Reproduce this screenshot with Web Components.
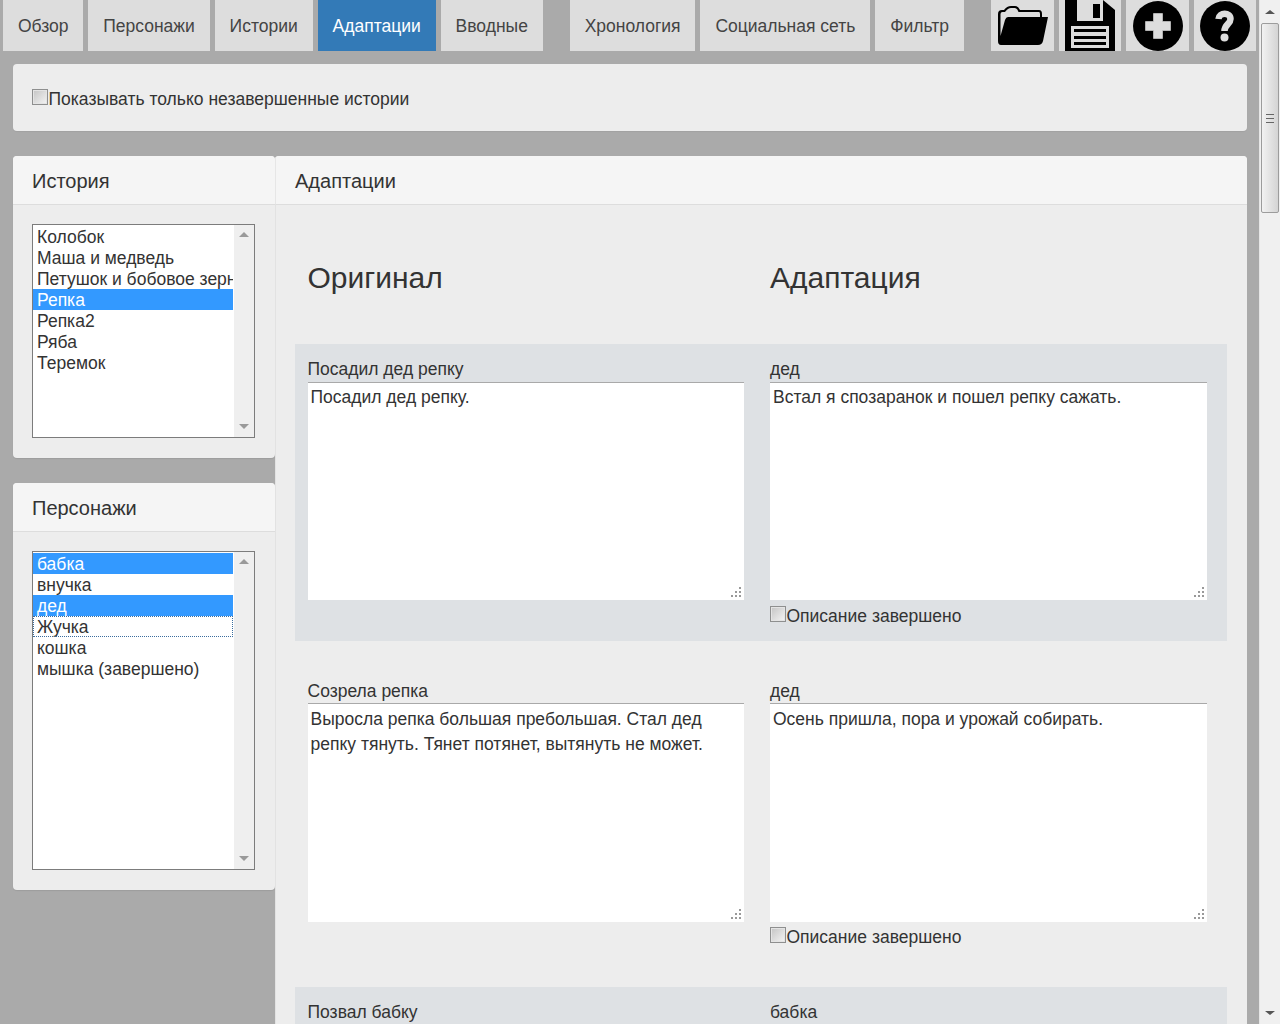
<!DOCTYPE html>
<html>
<head>
<meta charset="utf-8">
<style>
  html, body { margin: 0; padding: 0; height: 100%; overflow: hidden; background: #aaaaaa; }
  body { font-family: "Liberation Sans", Arial, sans-serif; color: #333; }
</style>
</head>
<body>
<story-app></story-app>

<script>
class StoryApp extends HTMLElement {
  constructor() {
    super();
    this.attachShadow({ mode: 'open' });
    this.shadowRoot.innerHTML = `
      <style>
        :host { display: flex; width: 1280px; height: 1024px; overflow: hidden; background: #aaa; }
        .page { width: 1259px; height: 1024px; overflow: hidden; flex: none; }
        .columns { display: flex; align-items: flex-start; padding: 0 12px 0 13px; }
        .side { width: 262px; flex: none; }
        .main { flex: 1; }
        .top { margin: 13px 12px 25px 13px; }
      </style>
      <div class="page">
        <nav-bar>
          <nav-tab>Обзор</nav-tab>
          <nav-tab>Персонажи</nav-tab>
          <nav-tab>Истории</nav-tab>
          <nav-tab active>Адаптации</nav-tab>
          <nav-tab>Вводные</nav-tab>
          <nav-tab gap>Хронология</nav-tab>
          <nav-tab>Социальная сеть</nav-tab>
          <nav-tab>Фильтр</nav-tab>
          <icon-tab kind="open" gap></icon-tab>
          <icon-tab kind="save"></icon-tab>
          <icon-tab kind="add"></icon-tab>
          <icon-tab kind="help"></icon-tab>
        </nav-bar>
        <filter-well class="top"><check-label>Показывать только незавершенные истории</check-label></filter-well>
        <div class="columns">
          <div class="side">
            <side-panel heading="История" style="margin-bottom:25px">
              <list-box height="214" items="Колобок|Маша и медведь|Петушок и бобовое зерно|*Репка|Репка2|Ряба|Теремок"></list-box>
            </side-panel>
            <side-panel heading="Персонажи">
              <list-box height="319" items="*бабка|внучка|*дед|~Жучка|кошка|мышка (завершено)"></list-box>
            </side-panel>
          </div>
          <div class="main">
            <main-panel heading="Адаптации">
              <adapt-head></adapt-head>
              <adapt-row shaded event="Посадил дед репку" who="дед"
                original="Посадил дед репку." text="Встал я спозаранок и пошел репку сажать."></adapt-row>
              <adapt-row event="Созрела репка" who="дед"
                original="Выросла репка большая пребольшая. Стал дед репку тянуть. Тянет потянет, вытянуть не может."
                text="Осень пришла, пора и урожай собирать."></adapt-row>
              <adapt-row shaded event="Позвал бабку" who="бабка" original="" text=""></adapt-row>
            </main-panel>
          </div>
        </div>
      </div>
      <page-scrollbar></page-scrollbar>
    `;
  }
}

class NavBar extends HTMLElement {
  constructor() {
    super();
    this.attachShadow({ mode: 'open' });
    this.shadowRoot.innerHTML = `
      <style>
        :host { display: flex; gap: 5px; height: 51px; padding-left: 3px; }
      </style>
      <slot></slot>
    `;
  }
}

class NavTab extends HTMLElement {
  constructor() {
    super();
    this.attachShadow({ mode: 'open' });
    this.shadowRoot.innerHTML = `
      <style>
        :host {
          display: block;
          height: 51px;
          line-height: 52px;
          padding: 0 14.9px;
          font-size: 17.5px;
          background: #dddddd;
          color: #444;
          white-space: nowrap;
          box-sizing: border-box;
        }
        :host([active]) { background: #337ab7; color: #fff; }
        :host([gap]) { margin-left: 22px; }
      </style>
      <slot></slot>
    `;
  }
}

const ICONS = {
  open: `<svg width="50" height="39" viewBox="0 0 50 39" style="display:block;margin-top:6px">
      <path d="M0 8 Q0 4 4 4 L6 4 Q9 0 13 0 L17 0 Q20 0 22 4 L41 4 Q44 4 44 8 L44 11 L50 11 L45 35 Q44 39 40 39 L3 39 Q0 39 0 35 Z" fill="#000"/>
      <path d="M2.5 8 Q2.5 6 4.5 6 L7 6 Q10 2 13 2 L17 2 Q19 2 20.5 6 L41 6 Q42 6 42 8 L42 11 L10 11 Q8 11 7 14 L2.5 30 Z" fill="#dddddd"/>
    </svg>`,
  save: `<svg width="50" height="51" viewBox="0 0 50 51" style="display:block">
      <path d="M0 0 H38 L50 10 V51 H0 Z" fill="#000"/>
      <rect x="12" y="0" width="26" height="21" fill="#dddddd"/>
      <rect x="28" y="4" width="7" height="14" fill="#000"/>
      <rect x="6" y="26" width="38" height="22" fill="#dddddd"/>
      <rect x="9" y="29" width="32" height="3" fill="#000"/>
      <rect x="9" y="36" width="32" height="3" fill="#000"/>
      <rect x="9" y="42" width="32" height="3" fill="#000"/>
    </svg>`,
  add: `<svg width="50" height="50" viewBox="0 0 50 50" style="display:block;margin-top:1px">
      <circle cx="25" cy="25" r="25" fill="#000"/>
      <path d="M20.5 12.5 H29.5 V20.5 H37.5 V29.5 H29.5 V37.5 H20.5 V29.5 H12.5 V20.5 H20.5 Z" fill="#dddddd" stroke="#dddddd" stroke-width="0.6" stroke-linejoin="round"/>
    </svg>`,
  help: `<svg width="50" height="50" viewBox="0 0 50 50" style="display:block;margin-top:1px">
      <circle cx="25" cy="25" r="25" fill="#000"/>
      <path d="M18.5 18 C19 11 30.5 11 30.5 18 C30.5 23 24.5 23.5 24.5 30" fill="none" stroke="#dddddd" stroke-width="6.5"/>
      <circle cx="24.5" cy="36.5" r="4" fill="#dddddd"/>
    </svg>`
};

class IconTab extends HTMLElement {
  constructor() {
    super();
    this.attachShadow({ mode: 'open' });
    this.shadowRoot.innerHTML = `
      <style>
        :host {
          display: flex;
          justify-content: center;
          align-items: flex-start;
          width: 62.5px;
          height: 51px;
          background: #dddddd;
          overflow: hidden;
        }
        :host([gap]) { margin-left: 22.6px; }
      </style>
      ${ICONS[this.getAttribute('kind')]}
    `;
  }
}

class FilterWell extends HTMLElement {
  constructor() {
    super();
    this.attachShadow({ mode: 'open' });
    this.shadowRoot.innerHTML = `
      <style>
        :host {
          display: flex;
          align-items: center;
          height: 67px;
          padding: 2px 0 0 19px;
          box-sizing: border-box;
          background: #ededed;
          border-radius: 4px;
          box-shadow: 0 1px 1px rgba(0,0,0,.05);
        }
      </style>
      <slot></slot>
    `;
  }
}

class CheckLabel extends HTMLElement {
  constructor() {
    super();
    this.attachShadow({ mode: 'open' });
    this.shadowRoot.innerHTML = `
      <style>
        :host { display: flex; font-size: 17.5px; line-height: 20px; color: #333; white-space: nowrap; }
        .box {
          width: 16px; height: 16px; margin-right: 0.5px; flex: none;
          box-sizing: border-box;
          border: 1px solid #8e8f8f;
          background: linear-gradient(135deg, #c4c4c4, #f4f4f4);
          box-shadow: inset 0 0 0 1px #e4e4e4;
        }
      </style>
      <span class="box"></span><slot></slot>
    `;
  }
}

class SidePanel extends HTMLElement {
  constructor() {
    super();
    this.attachShadow({ mode: 'open' });
    this.shadowRoot.innerHTML = `
      <style>
        :host {
          display: block;
          background: #ededed;
          border-radius: 4px;
          overflow: hidden;
          box-shadow: 0 1px 1px rgba(0,0,0,.08);
        }
        .head {
          height: 48px;
          line-height: 51px;
          padding-left: 19px;
          font-size: 20px;
          color: #333;
          background: #f5f5f5;
          border-bottom: 1px solid #dddddd;
        }
        .body { padding: 19px 20px 20px 19px; }
      </style>
      <div class="head">${this.getAttribute('heading')}</div>
      <div class="body"><slot></slot></div>
    `;
  }
}

class MainPanel extends HTMLElement {
  constructor() {
    super();
    this.attachShadow({ mode: 'open' });
    this.shadowRoot.innerHTML = `
      <style>
        :host {
          display: block;
          background: #ededed;
          border-radius: 4px 4px 0 0;
          overflow: hidden;
          box-shadow: inset 1px 0 #e2e2e2;
        }
        .head {
          height: 48px;
          line-height: 51px;
          padding-left: 19px;
          font-size: 20px;
          color: #333;
          background: #f5f5f5;
          border-bottom: 1px solid #dddddd;
          border-left: 1px solid #e6e6e6;
        }
        .body { padding: 0 20px; }
      </style>
      <div class="head">${this.getAttribute('heading')}</div>
      <div class="body"><slot></slot></div>
    `;
  }
}

class ListBox extends HTMLElement {
  constructor() {
    super();
    this.attachShadow({ mode: 'open' });
    const rows = this.getAttribute('items').split('|').map(item => {
      let cls = '';
      if (item[0] == '*') cls = 'sel';
      if (item[0] == '~') cls = 'focus';
      return `<div class="row ${cls}">${cls ? item.slice(1) : item}</div>`;
    }).join('');
    this.shadowRoot.innerHTML = `
      <style>
        :host {
          display: flex;
          box-sizing: border-box;
          width: 223px;
          height: ${this.getAttribute('height')}px;
          border: 1px solid #7c7c7c;
          background: #fff;
          font-size: 17.5px;
          color: #333;
        }
        .rows { width: 200px; flex: none; padding-top: 1px; overflow: hidden; }
        .row {
          height: 21px;
          line-height: 22px;
          padding-left: 4px;
          white-space: nowrap;
          overflow: hidden;
          box-sizing: border-box;
        }
        .sel { background: #3399ff; color: #fff; }
        .focus { outline: 1px dotted #3b6d9e; outline-offset: -1px; }
        .track {
          margin-left: 1px;
          flex: 1;
          background: #efefef;
          display: flex;
          flex-direction: column;
          justify-content: space-between;
          align-items: center;
          padding: 7px 0 8px;
        }
        .up, .down { width: 0; height: 0; border-left: 5px solid transparent; border-right: 5px solid transparent; }
        .up { border-bottom: 5px solid #9a9a9a; }
        .down { border-top: 5px solid #9a9a9a; }
      </style>
      <div class="rows">${rows}</div>
      <div class="track"><span class="up"></span><span class="down"></span></div>
    `;
  }
}

class AdaptHead extends HTMLElement {
  constructor() {
    super();
    this.attachShadow({ mode: 'open' });
    this.shadowRoot.innerHTML = `
      <style>
        :host {
          display: grid;
          grid-template-columns: 462.5px 1fr;
          height: 139px;
          box-sizing: border-box;
          padding: 55px 0 0 12.5px;
          font-size: 30px;
          line-height: 36px;
          color: #333;
        }
      </style>
      <div>Оригинал</div><div>Адаптация</div>
    `;
  }
}

class TextBox extends HTMLElement {
  constructor() {
    super();
    this.attachShadow({ mode: 'open' });
    this.shadowRoot.innerHTML = `
      <style>
        :host {
          display: block;
          position: relative;
          height: 218.5px;
          box-sizing: border-box;
          padding: 2.5px 3px 2px;
          background: #fff;
          border-top: 1px solid #a9a9a9;
          font-size: 17.5px;
          line-height: 25px;
          color: #333;
        }
        svg { position: absolute; right: 3px; bottom: 3px; }
      </style>
      <slot></slot>
      <svg width="10" height="10" viewBox="0 0 10 10" fill="#999">
        <rect x="8" y="0" width="2" height="2"/>
        <rect x="4" y="4" width="2" height="2"/><rect x="8" y="4" width="2" height="2"/>
        <rect x="0" y="8" width="2" height="2"/><rect x="4" y="8" width="2" height="2"/><rect x="8" y="8" width="2" height="2"/>
      </svg>
    `;
  }
}

class AdaptRow extends HTMLElement {
  constructor() {
    super();
    this.attachShadow({ mode: 'open' });
    this.shadowRoot.innerHTML = `
      <style>
        :host {
          display: grid;
          grid-template-columns: 436.5px 436.5px;
          column-gap: 26px;
          padding: 13px 0 14px 12.5px;
          height: 297px;
          box-sizing: border-box;
          margin-bottom: 24.5px;
          font-size: 17.5px;
          color: #333;
        }
        :host([shaded]) { background: #dee1e4; }
        .label { height: 24.5px; line-height: 24px; white-space: nowrap; }
        check-label { margin-top: 5.5px; }
      </style>
      <div>
        <div class="label">${this.getAttribute('event')}</div>
        <text-box>${this.getAttribute('original')}</text-box>
      </div>
      <div>
        <div class="label">${this.getAttribute('who')}</div>
        <text-box>${this.getAttribute('text')}</text-box>
        <check-label>Описание завершено</check-label>
      </div>
    `;
  }
}

class PageScrollbar extends HTMLElement {
  constructor() {
    super();
    this.attachShadow({ mode: 'open' });
    this.shadowRoot.innerHTML = `
      <style>
        :host {
          display: flex;
          flex-direction: column;
          align-items: center;
          width: 21px;
          height: 1024px;
          box-sizing: border-box;
          background: #f0f0f0;
          border-left: 1px solid #e6e6e6;
        }
        .btn { height: 23px; display: flex; align-items: center; justify-content: center; flex: none; }
        .up, .down { width: 0; height: 0; border-left: 5px solid transparent; border-right: 5px solid transparent; }
        .up { border-bottom: 4px solid #555; }
        .down { border-top: 4px solid #555; }
        .thumb {
          width: 18px; height: 190px;
          box-sizing: border-box;
          border: 1px solid #9c9c9c;
          border-radius: 2px;
          background: linear-gradient(90deg, #f2f2f2, #d4d4d4);
          display: flex; align-items: center; justify-content: center;
          flex: none;
        }
        .grip { width: 8px; height: 9px; background: repeating-linear-gradient(180deg, #666 0 1px, transparent 1px 4px); }
        .fill { flex: 1; }
      </style>
      <div class="btn"><span class="up"></span></div>
      <div class="thumb"><span class="grip"></span></div>
      <div class="fill"></div>
      <div class="btn"><span class="down"></span></div>
    `;
  }
}

customElements.define('nav-bar', NavBar);
customElements.define('nav-tab', NavTab);
customElements.define('icon-tab', IconTab);
customElements.define('filter-well', FilterWell);
customElements.define('check-label', CheckLabel);
customElements.define('side-panel', SidePanel);
customElements.define('main-panel', MainPanel);
customElements.define('list-box', ListBox);
customElements.define('adapt-head', AdaptHead);
customElements.define('text-box', TextBox);
customElements.define('adapt-row', AdaptRow);
customElements.define('page-scrollbar', PageScrollbar);
customElements.define('story-app', StoryApp);
</script>
</body>
</html>
